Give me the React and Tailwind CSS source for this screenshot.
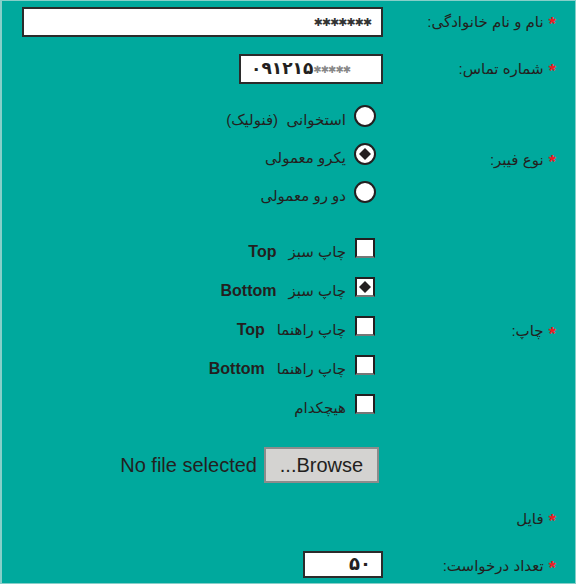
import React from "react";

const Star = () => (
  <span className="text-[#ed1c24] text-[19px] font-bold leading-none font-['Liberation_Sans'] pt-[3px]">*</span>
);

function Label({ children, className = "" }) {
  return (
    <div className={"flex items-center gap-[5px] pr-[19px] text-[15px] " + className}>
      <Star />
      <span>{children}</span>
    </div>
  );
}

const Diamond = () => (
  <svg width="12" height="12" viewBox="0 0 12 12">
    <polygon points="6,0 12,6 6,12 0,6" fill="#231f20" />
  </svg>
);

function Radio({ checked, children }) {
  return (
    <div className="h-[38px] flex items-center gap-[8px] pr-[7px]">
      <span className="w-[22px] h-[22px] rounded-full border-2 border-[#231f20] bg-white flex items-center justify-center shrink-0">
        {checked && <Diamond />}
      </span>
      <span className="pt-[8px] whitespace-pre">{children}</span>
    </div>
  );
}

function Check({ checked, fa, en }) {
  return (
    <div className="h-[39px] flex items-center gap-[9px] pr-[8px]">
      <span className="w-[20px] h-[20px] border-2 border-[#231f20] bg-white border-b-[#777] flex items-center justify-center shrink-0">
        {checked && <Diamond />}
      </span>
      <span className="pt-[9px] flex items-center gap-[12px]">
        <span>{fa}</span>
        {en && (
          <span className="font-['Liberation_Sans'] font-bold text-[16px]">{en}</span>
        )}
      </span>
    </div>
  );
}

export default function App() {
  return (
    <div
      dir="rtl"
      className="w-[576px] h-[584px] bg-[#00a99d] border-t border-r border-b border-l-2 border-[#86cfc9] text-[#231f20] font-['Liberation_Sans','DejaVu_Sans',sans-serif] text-[15px] overflow-hidden"
    >
      {/* name */}
      <div className="grid grid-cols-[192px_1fr] mt-[6px] h-[30px]">
        <Label>نام و نام خانوادگی:</Label>
        <div className="flex">
          <div className="w-[361px] h-[30px] bg-white border-2 border-[#2b2b2b] flex items-center pr-[10px] text-[11px] text-[#333] tracking-[-1px]">
            ✱✱✱✱✱✱✱
          </div>
        </div>
      </div>

      {/* phone */}
      <div className="grid grid-cols-[192px_1fr] mt-[17px] h-[30px]">
        <Label>شماره تماس:</Label>
        <div className="flex">
          <div
            dir="ltr"
            className="w-[144px] h-[30px] bg-white border-2 border-[#2b2b2b] flex items-center pl-[10px] text-[17px] font-bold"
          >
            <span>۰۹۱۲۱۵</span>
            <span className="text-[10px] text-[#888] tracking-[-1px]">✱✱✱✱✱</span>
          </div>
        </div>
      </div>

      {/* fiber type */}
      <div className="grid grid-cols-[192px_1fr] mt-[13px]">
        <Label className="pt-[12px]">نوع فیبر:</Label>
        <div className="flex flex-col">
          <Radio>استخوانی  (فنولیک)</Radio>
          <Radio checked>یکرو معمولی</Radio>
          <Radio>دو رو معمولی</Radio>
        </div>
      </div>

      {/* print */}
      <div className="grid grid-cols-[192px_1fr] mt-[17px]">
        <Label className="pt-[12px]">چاپ:</Label>
        <div className="flex flex-col">
          <Check fa="چاپ سبز" en="Top" />
          <Check checked fa="چاپ سبز" en="Bottom" />
          <Check fa="چاپ راهنما" en="Top" />
          <Check fa="چاپ راهنما" en="Bottom" />
          <Check fa="هیچکدام" />
        </div>
      </div>

      {/* file */}
      <div className="grid grid-cols-[192px_1fr] h-[112px]">
        <Label className="items-end pb-[5px]">فایل</Label>
        <div className="flex items-start pt-[24px] pr-[4px] gap-[7px]">
          <button
            dir="ltr"
            className="w-[115px] h-[36px] bg-[#d4d3d1] border-2 border-[#8c8c8c] text-[20px] font-['Liberation_Sans'] text-[#231f20]"
          >
            ...Browse
          </button>
          <span dir="ltr" className="text-[20px] font-['Liberation_Sans'] leading-[36px]">
            No file selected
          </span>
        </div>
      </div>

      {/* count */}
      <div className="grid grid-cols-[192px_1fr] mt-[16px] h-[27px]">
        <Label className="pt-[3px]">تعداد درخواست:</Label>
        <div className="flex">
          <div className="w-[80px] h-[27px] bg-white border-2 border-[#2b2b2b] flex items-center pr-[10px] text-[18px] font-bold">
            ۵۰
          </div>
        </div>
      </div>
    </div>
  );
}
